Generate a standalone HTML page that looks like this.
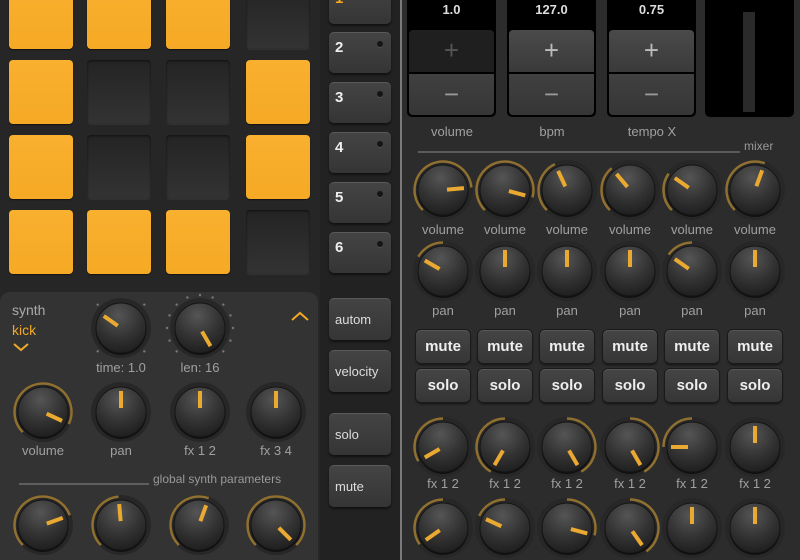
<!DOCTYPE html>
<html><head><meta charset="utf-8"><style>
*{margin:0;padding:0;box-sizing:border-box}
html,body{width:800px;height:560px;overflow:hidden}
body{background:#262626;font-family:"Liberation Sans",sans-serif;position:relative}
.a{position:absolute}
.pad{position:absolute;width:64px;height:64px;border-radius:4px}
.on{background:linear-gradient(#f9b02e,#f5a925);box-shadow:0 1px 1px rgba(0,0,0,.5)}
.off{background:linear-gradient(#242424,#333);box-shadow:inset 0 1px 2px rgba(0,0,0,.6),0 1px 0 rgba(255,255,255,.05)}
.tb{position:absolute;left:329px;width:62px;height:41px;border-radius:5px;background:linear-gradient(#444,#353535);box-shadow:0 2px 2px #111,inset 0 1px 0 rgba(255,255,255,.12);color:#eee;font-weight:bold;font-size:15px;padding:7px 0 0 6px}
.tb i{position:absolute;right:8px;top:9px;width:6px;height:6px;border-radius:3px;background:#151515;box-shadow:0 1px 0 rgba(255,255,255,.1)}
.sb{position:absolute;left:329px;width:62px;height:42px;border-radius:5px;background:linear-gradient(#444,#353535);box-shadow:0 2px 2px #111,inset 0 1px 0 rgba(255,255,255,.12);color:#ddd;font-size:13px;padding:14px 0 0 6px}
.lbl{position:absolute;color:#a0a0a0;font-size:13px;text-align:center;width:80px}
.ms{position:absolute;width:54px;height:33px;border-radius:5px;background:linear-gradient(#454545,#363636);box-shadow:0 0 0 1px #1a1a1a,0 2px 2px #111,inset 0 1px 0 rgba(255,255,255,.1);color:#eee;font-weight:bold;font-size:15px;text-align:center;line-height:33px}
.disp{position:absolute;top:0;width:89px;height:117px;background:#000;border-radius:0 0 5px 5px}
.disp b{display:block;text-align:center;color:#ddd;font-size:13px;padding-top:2px}
.st{position:absolute;left:2px;width:85px;height:42px;color:#999;font-size:26px;text-align:center;line-height:40px}
</style></head><body>
<div class="a" style="left:0;top:0;width:320px;height:290px;background:#262626"></div>
<div class="pad on" style="left:9px;top:-15px"></div><div class="pad on" style="left:87px;top:-15px"></div><div class="pad on" style="left:166px;top:-15px"></div><div class="pad off" style="left:246px;top:-15px"></div>
<div class="pad on" style="left:9px;top:60px"></div><div class="pad off" style="left:87px;top:60px"></div><div class="pad off" style="left:166px;top:60px"></div><div class="pad on" style="left:246px;top:60px"></div>
<div class="pad on" style="left:9px;top:135px"></div><div class="pad off" style="left:87px;top:135px"></div><div class="pad off" style="left:166px;top:135px"></div><div class="pad on" style="left:246px;top:135px"></div>
<div class="pad on" style="left:9px;top:210px"></div><div class="pad on" style="left:87px;top:210px"></div><div class="pad on" style="left:166px;top:210px"></div><div class="pad off" style="left:246px;top:210px"></div>
<div class="a" style="left:320px;top:0;width:80px;height:560px;background:#222"></div>
<div class="a" style="left:400px;top:0;width:2px;height:560px;background:#7a7a7a"></div>
<div class="a" style="left:402px;top:0;width:398px;height:560px;background:#2c2c2c"></div>
<div class="tb" style="top:-17px"><span style="color:#f5a925">1</span><i></i></div>
<div class="tb" style="top:32px">2<i></i></div>
<div class="tb" style="top:82px">3<i></i></div>
<div class="tb" style="top:132px">4<i></i></div>
<div class="tb" style="top:182px">5<i></i></div>
<div class="tb" style="top:232px">6<i></i></div>
<div class="sb" style="top:298px">autom</div>
<div class="sb" style="top:350px">velocity</div>
<div class="sb" style="top:413px">solo</div>
<div class="sb" style="top:465px">mute</div>
<div class="a" style="left:0;top:292px;width:318px;height:268px;background:#333;border-radius:10px 10px 0 0"></div>
<div class="a" style="left:12px;top:302px;color:#aaa;font-size:14px">synth</div>
<div class="a" style="left:12px;top:322px;color:#f0a828;font-size:14px">kick</div>
<svg class="a" style="left:0;top:0" width="800" height="560" id="s">
<polyline points="14,344 21,350 28,344" fill="none" stroke="#f0a828" stroke-width="2"/>
<polyline points="292,320 300,313 308,320" fill="none" stroke="#f0a828" stroke-width="2"/>
<line x1="19" y1="484" x2="149" y2="484" stroke="#888" stroke-width="1"/>
<line x1="418" y1="152" x2="740" y2="152" stroke="#888" stroke-width="1"/>
</svg>
<div class="lbl" style="left:81px;top:360px">time: 1.0</div>
<div class="lbl" style="left:160px;top:360px">len: 16</div>
<div class="lbl" style="left:3px;top:443px">volume</div>
<div class="lbl" style="left:81px;top:443px">pan</div>
<div class="lbl" style="left:160px;top:443px">fx 1 2</div>
<div class="lbl" style="left:236px;top:443px">fx 3 4</div>
<div class="a" style="left:153px;top:472px;color:#999;font-size:12px">global synth parameters</div>
<div class="a" style="left:744px;top:139px;color:#999;font-size:12px">mixer</div>
<div class="disp" style="left:407px"><b>1.0</b><div class="st" style="top:30px;background:#1f1f1f;border-radius:4px 4px 0 0;color:#555">+</div><div class="st" style="top:73px;background:linear-gradient(#404040,#363636);border-radius:0 0 4px 4px;border-top:1px solid #000">−</div></div>
<div class="disp" style="left:507px"><b>127.0</b><div class="st" style="top:30px;background:linear-gradient(#4a4a4a,#3a3a3a);border-radius:4px 4px 0 0;color:#bbb">+</div><div class="st" style="top:73px;background:linear-gradient(#404040,#363636);border-radius:0 0 4px 4px;border-top:1px solid #000">−</div></div>
<div class="disp" style="left:607px"><b>0.75</b><div class="st" style="top:30px;background:linear-gradient(#4a4a4a,#3a3a3a);border-radius:4px 4px 0 0;color:#bbb">+</div><div class="st" style="top:73px;background:linear-gradient(#404040,#363636);border-radius:0 0 4px 4px;border-top:1px solid #000">−</div></div>
<div class="a" style="left:705px;top:0;width:89px;height:117px;background:#000;border-radius:0 0 5px 5px"></div>
<div class="a" style="left:743px;top:12px;width:12px;height:100px;background:#2a2a2a"></div>
<div class="lbl" style="left:412px;top:124px">volume</div>
<div class="lbl" style="left:512px;top:124px">bpm</div>
<div class="lbl" style="left:612px;top:124px">tempo X</div>
<div class="lbl" style="left:403px;top:222px">volume</div><div class="lbl" style="left:465px;top:222px">volume</div><div class="lbl" style="left:527px;top:222px">volume</div><div class="lbl" style="left:590px;top:222px">volume</div><div class="lbl" style="left:652px;top:222px">volume</div><div class="lbl" style="left:715px;top:222px">volume</div>
<div class="lbl" style="left:403px;top:303px">pan</div><div class="lbl" style="left:465px;top:303px">pan</div><div class="lbl" style="left:527px;top:303px">pan</div><div class="lbl" style="left:590px;top:303px">pan</div><div class="lbl" style="left:652px;top:303px">pan</div><div class="lbl" style="left:715px;top:303px">pan</div>
<div class="lbl" style="left:403px;top:476px">fx 1 2</div><div class="lbl" style="left:465px;top:476px">fx 1 2</div><div class="lbl" style="left:527px;top:476px">fx 1 2</div><div class="lbl" style="left:590px;top:476px">fx 1 2</div><div class="lbl" style="left:652px;top:476px">fx 1 2</div><div class="lbl" style="left:715px;top:476px">fx 1 2</div>
<div class="ms" style="left:416px;top:330px">mute</div><div class="ms" style="left:478px;top:330px">mute</div><div class="ms" style="left:540px;top:330px">mute</div><div class="ms" style="left:603px;top:330px">mute</div><div class="ms" style="left:665px;top:330px">mute</div><div class="ms" style="left:728px;top:330px">mute</div>
<div class="ms" style="left:416px;top:369px">solo</div><div class="ms" style="left:478px;top:369px">solo</div><div class="ms" style="left:540px;top:369px">solo</div><div class="ms" style="left:603px;top:369px">solo</div><div class="ms" style="left:665px;top:369px">solo</div><div class="ms" style="left:728px;top:369px">solo</div>
<svg class="a" style="left:0;top:0" width="800" height="560" id="k">
<defs><radialGradient id="g" cx="0.45" cy="0.25" r="0.8"><stop offset="0" stop-color="#555"/><stop offset="0.55" stop-color="#333"/><stop offset="1" stop-color="#1c1c1c"/></radialGradient></defs>
</svg>
<script>
var k=document.getElementById('k'),h='';
function p(cx,cy,r,a){a=a*Math.PI/180;return [cx+r*Math.sin(a),cy-r*Math.cos(a)];}
function arc(cx,cy,r,a1,a2){if(a1>a2){var t=a1;a1=a2;a2=t}var s=p(cx,cy,r,a1),e=p(cx,cy,r,a2);return '<path d="M'+s[0]+' '+s[1]+' A'+r+' '+r+' 0 '+((a2-a1)>180?1:0)+' 1 '+e[0]+' '+e[1]+'" fill="none" stroke="#8f7030" stroke-width="2.5"/>';}
function knob(cx,cy,a,a0,dots){h+='<circle cx="'+cx+'" cy="'+cy+'" r="30" fill="#272727"/>';
if(a0!==null&&a0!==a)h+=arc(cx,cy,28.5,a0,a);
if(dots){for(var d=-135;d<=135;d+=(dots==1?90:22.5)){var q=p(cx,cy,33,d);h+='<circle cx="'+q[0]+'" cy="'+q[1]+'" r="1.2" fill="#777"/>';}}
h+='<circle cx="'+cx+'" cy="'+(cy+1.5)+'" r="25.5" fill="#111"/><circle cx="'+cx+'" cy="'+cy+'" r="25" fill="url(#g)" stroke="#151515" stroke-width="1"/>';
var s=p(cx,cy,4,a),e=p(cx,cy,21,a);h+='<line x1="'+s[0]+'" y1="'+s[1]+'" x2="'+e[0]+'" y2="'+e[1]+'" stroke="#eaa930" stroke-width="4"/>';}
knob(121,328,-55,null,1);knob(200,328,150,null,2);
knob(43,412,115,-135);knob(121,412,0,0);knob(200,412,0,0);knob(276,412,0,0);
knob(43,525,70,-135);knob(121,525,-5,-135);knob(199,525,20,-135);knob(276,525,135,-135);
var xs=[443,505,567,630,692,755];
[85,105,-25,-40,-55,20].forEach(function(a,i){knob(xs[i],190,a,-135)});
[-60,0,0,0,-55,0].forEach(function(a,i){knob(xs[i],271,a,0)});
[-120,-150,150,150,-90,0].forEach(function(a,i){knob(xs[i],447,a,0)});
[-125,-65,105,145,0,0].forEach(function(a,i){knob(xs[i],528,a,0)});
k.insertAdjacentHTML('beforeend',h);
</script>
</body></html>
